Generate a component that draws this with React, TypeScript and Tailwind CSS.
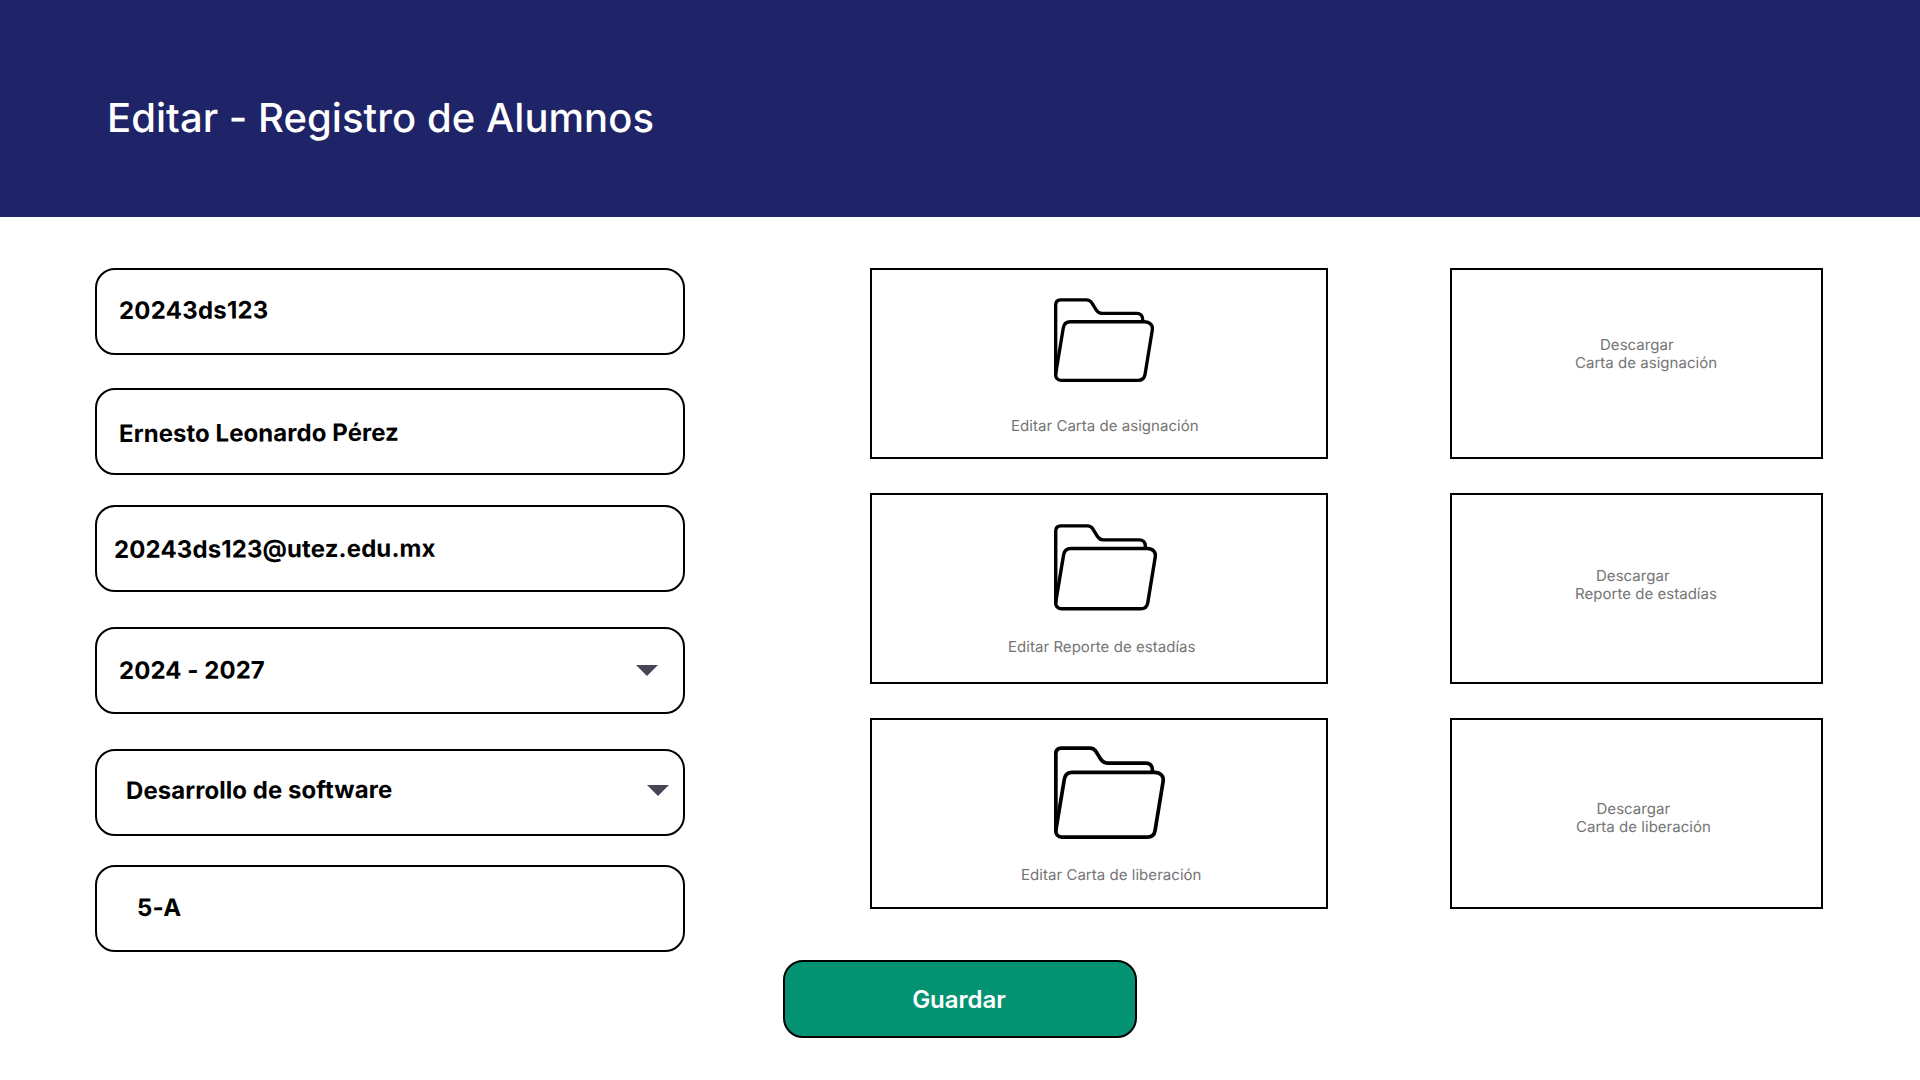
import React from "react";

type Field = { text: string; box: string; label: string; arrow?: string };

const fields: Field[] = [
  { text: "20243ds123", box: "mt-0", label: "pl-[21.5px] pt-[26px] tracking-[0.22px]" },
  { text: "Ernesto Leonardo Pérez", box: "mt-[33px]", label: "pl-[22px] pt-[29px] tracking-[0.05px]" },
  { text: "20243ds123@utez.edu.mx", box: "mt-[30px]", label: "pl-[17px] pt-[28px] tracking-[0.12px]" },
  { text: "2024 - 2027", box: "mt-[35px]", label: "pl-[22px] pt-[27px] tracking-[0.05px]", arrow: "mt-[36px] mr-[25px]" },
  { text: "Desarrollo de software", box: "mt-[35px]", label: "pl-[29px] pt-[25px] tracking-[0.05px]", arrow: "mt-[34px] mr-[14px]" },
  { text: "5-A", box: "mt-[29px]", label: "pl-[40px] pt-[26px] tracking-[0.2px]" },
];

const editCards = [
  { text: "Editar Carta de asignación", icon: "mt-[28px] h-[84px] w-[100px]", label: "mt-[35px] ml-[139px]" },
  { text: "Editar Reporte de estadías", icon: "mt-[29px] h-[86.5px] w-[103px]", label: "mt-[27.5px] ml-[136px]" },
  { text: "Editar Carta de liberación", icon: "mt-[26px] h-[93px] w-[111px]", label: "mt-[27px] ml-[149px]" },
];

const downloadCards = [
  { text: "Carta de asignación", pad: "pt-[66px]", first: "pl-[148px]", second: "pl-[123px]" },
  { text: "Reporte de estadías", pad: "pt-[72px]", first: "pl-[144px]", second: "pl-[123px]" },
  { text: "Carta de liberación", pad: "pt-[80px]", first: "pl-[144.5px]", second: "pl-[124px]" },
];

function FolderIcon({ className }: { className: string }) {
  return (
    <svg className={className} viewBox="0 0 300 251" preserveAspectRatio="none" fill="none" stroke="#000" strokeWidth="10">
      <path d="M5 230V21C5 11 11 5.5 20 5.5H97C105 5.5 109 8 113 14L126 35C131 43 135 46 143 46H248C259 46 266 53 266 64V71" />
      <path d="M49 71H272C287 71 297 81 295 95L273 229C271 240 263 246 252 246H21C11 246 4 238 5 227L28 89C30 78 38 71 49 71Z" />
    </svg>
  );
}

function Arrow({ className }: { className: string }) {
  return (
    <svg className={`h-[11px] w-[22px] shrink-0 ${className}`} viewBox="0 0 22 11">
      <path d="M0 0H22L11 11Z" fill="#4a4459" />
    </svg>
  );
}

export default function App() {
  return (
    <div className="h-[1080px] w-[1920px] overflow-hidden bg-white font-['Inter',sans-serif] text-black [text-rendering:geometricPrecision]">
      <header className="h-[217px] bg-[#1e2467] pt-[94px] pl-[107px]">
        <h1 className="text-[40px] leading-[48px] font-medium tracking-[0.04px] whitespace-nowrap text-white">Editar - Registro de Alumnos</h1>
      </header>

      <main className="flex pt-[51px] pl-[95px]">
        <form className="w-[590px]">
          {fields.map((f) => (
            <div key={f.text} className={`flex h-[87px] items-start justify-between rounded-[20px] border-2 border-black ${f.box}`}>
              <div className={f.label}>
                <span className="block origin-left rotate-[-0.25deg] text-2xl leading-[29px] font-bold whitespace-nowrap">{f.text}</span>
              </div>
              {f.arrow && <Arrow className={f.arrow} />}
            </div>
          ))}
        </form>

        <section className="ml-[185px] flex w-[458px] flex-col gap-[34px]">
          {editCards.map((c) => (
            <div key={c.text} className="h-[191px] border-2 border-black text-[15px] leading-[18px] tracking-[0.04px] text-[#757575]">
              <FolderIcon className={`ml-[182px] block ${c.icon}`} />
              <p className={`whitespace-nowrap ${c.label}`}>{c.text}</p>
            </div>
          ))}
        </section>

        <section className="ml-[122px] flex w-[373px] flex-col gap-[34px]">
          {downloadCards.map((c) => (
            <div key={c.text} className={`h-[191px] border-2 border-black text-[15px] leading-[18px] tracking-[0.03px] text-[#757575] ${c.pad}`}>
              <p className={c.first}>Descargar</p>
              <p className={c.second}>{c.text}</p>
            </div>
          ))}
        </section>
      </main>

      <button className="mt-[8px] ml-[783px] flex h-[78px] w-[354px] items-center justify-center rounded-[20px] border-2 border-black bg-[#049372] pr-[2px] text-2xl leading-[29px] font-semibold text-white">
        Guardar
      </button>
    </div>
  );
}
